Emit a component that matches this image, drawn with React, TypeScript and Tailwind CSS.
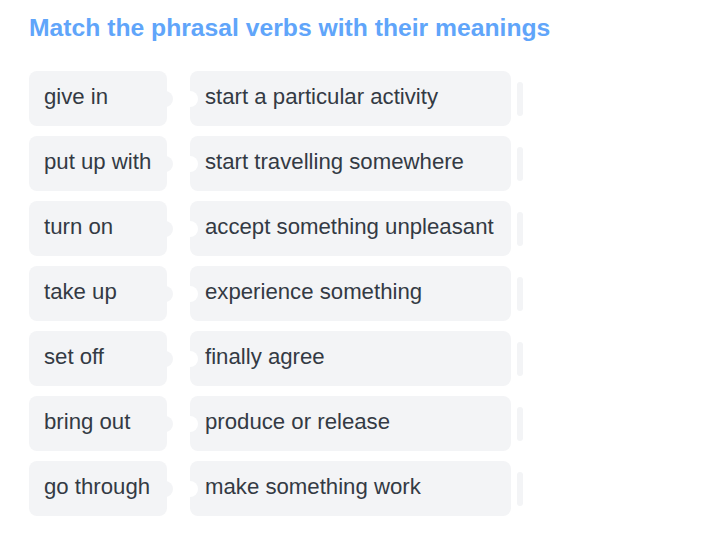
const pairs: [string, string][] = [
  ['give in', 'start a particular activity'],
  ['put up with', 'start travelling somewhere'],
  ['turn on', 'accept something unpleasant'],
  ['take up', 'experience something'],
  ['set off', 'finally agree'],
  ['bring out', 'produce or release'],
  ['go through', 'make something work'],
];

function MatchRow({ term, meaning }: { term: string; meaning: string }) {
  return (
    <div className="flex items-center h-[55px]">
      <div className="relative w-[138px] h-full rounded-lg bg-[#f3f4f6] flex items-center pl-[15px] pb-[3px]">
        <span className="relative z-10">{term}</span>
        <span className="absolute right-[-6px] top-1/2 -translate-y-1/2 w-4 h-4 rounded-full bg-[#f3f4f6]" />
      </div>
      <div className="relative ml-[23px] w-[321px] h-full rounded-lg bg-[#f3f4f6] flex items-center pl-[15px] pb-[3px] overflow-hidden">
        <span className="absolute left-[-8px] top-1/2 -translate-y-1/2 w-4 h-4 rounded-full bg-white" />
        <span className="relative">{meaning}</span>
      </div>
      <div className="ml-[6px] w-[6px] h-[34px] rounded-full bg-[#f3f4f6]" />
    </div>
  );
}

export default function App() {
  return (
    <div
      className="min-h-[543px] w-[708px] bg-white pl-[29px] pt-[12px] text-[#333a44]"
      style={{ fontFamily: '"Liberation Sans", Arial, sans-serif' }}
    >
      <h1 className="text-[24.7px] font-bold text-[#60a5fa] leading-[32px]">
        Match the phrasal verbs with their meanings
      </h1>
      <div className="mt-[27px] flex flex-col gap-[10px] text-[22.2px]">
        {pairs.map(([term, meaning]) => (
          <MatchRow key={term} term={term} meaning={meaning} />
        ))}
      </div>
    </div>
  );
}
